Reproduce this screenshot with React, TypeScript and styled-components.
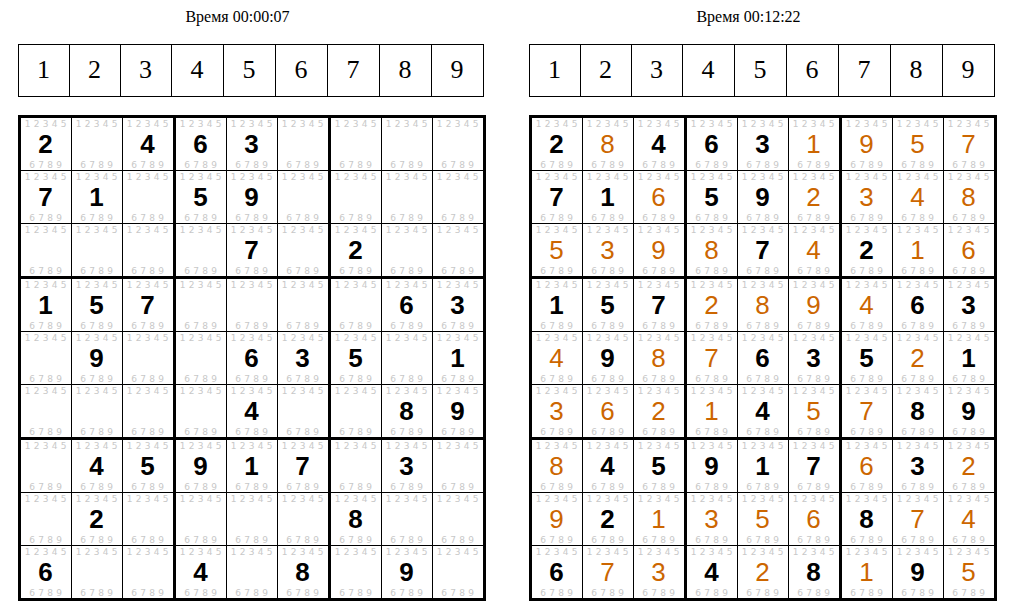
import React from 'react';
import styled, { createGlobalStyle } from 'styled-components';

const GlobalStyle = createGlobalStyle`
  *, *::before, *::after { box-sizing: border-box; }
  body {
    margin: 0;
    background: #fff;
    color: #000;
    font-family: "Liberation Serif", "Times New Roman", serif;
    font-size: 16px;
    line-height: 18px;
  }
`;

const Page = styled.main`
  display: grid;
  grid-template-columns: 1fr 1fr;
  column-gap: 43px;
  padding: 8px 22px 8px 18px;
`;

const Game = styled.section`
  display: flex;
  flex-direction: column;
  gap: 18px;
  min-width: 0;
`;

const Timer = styled.p`
  margin: 0;
  padding-right: 29px;
  text-align: center;
`;

const Picker = styled.div`
  display: grid;
  grid-template-columns: repeat(3, 51fr) repeat(6, 52fr);
  margin-right: 2px;
  border-left: 1px solid #000;
`;

const PickButton = styled.button`
  height: 53px;
  min-width: 0;
  margin: 0;
  padding: 0 1px 2px 0;
  border: solid #000;
  border-width: 1px 1px 1px 0;
  border-radius: 0;
  background: #fff;
  color: #000;
  font: 26px/30px "Liberation Serif", "Times New Roman", serif;
  cursor: pointer;
`;

const Board = styled.table`
  width: 100%;
  table-layout: fixed;
  border-collapse: separate;
  border-spacing: 0;
  border: solid #000;
  border-width: 3px 0 0 3px;
`;

const Column = styled.col<{ $wide: boolean }>`
  width: ${(p) => (p.$wide ? 53 : 51)}px;
`;

const Cell = styled.td<{ $blockRight: boolean; $blockBottom: boolean }>`
  padding: 0;
  vertical-align: top;
  border: solid #000;
  border-width: 0 ${(p) => (p.$blockRight ? 3 : 1)}px ${(p) => (p.$blockBottom ? 3 : 1)}px 0;
`;

const CellBody = styled.div`
  display: flex;
  flex-direction: column;
  align-items: center;
  height: 52px;
  padding: 1px 1px 0 0;
`;

const Hints = styled.div`
  display: grid;
  grid-auto-flow: column;
  grid-auto-columns: 9px;
  height: 10px;
  color: #c8c8c8;
  font: 9px/10px "DejaVu Sans", Verdana, sans-serif;
  text-align: center;
`;

const Value = styled.div<{ $given: boolean }>`
  height: 31px;
  color: ${(p) => (p.$given ? '#000' : '#cc6600')};
  font-family: "Liberation Sans", Arial, sans-serif;
  font-size: 26px;
  line-height: 31px;
  font-weight: ${(p) => (p.$given ? 700 : 400)};
`;

const DIGITS = ['1', '2', '3', '4', '5', '6', '7', '8', '9'];

const GIVEN = [
  '2.463....',
  '71.59....',
  '....7.2..',
  '157....63',
  '.9..635.1',
  '....4..89',
  '.45917.3.',
  '.2....8..',
  '6..4.8.9.',
];

const SOLVED = [
  '284631957',
  '716592348',
  '539874216',
  '157289463',
  '498763521',
  '362145789',
  '845917632',
  '921356874',
  '673428195',
];

function HintRow({ digits }: { digits: string[] }) {
  return (
    <Hints>
      {digits.map((d) => (
        <span key={d}>{d}</span>
      ))}
    </Hints>
  );
}

function Sudoku({ time, rows }: { time: string; rows: string[] }) {
  return (
    <Game>
      <Timer>Время {time}</Timer>
      <Picker>
        {DIGITS.map((d) => (
          <PickButton key={d} type="button">
            {d}
          </PickButton>
        ))}
      </Picker>
      <Board>
        <colgroup>
          {DIGITS.map((d, c) => (
            <Column key={d} $wide={c % 3 === 2} />
          ))}
        </colgroup>
        <tbody>
          {rows.map((row, r) => (
            <tr key={r}>
              {row.split('').map((ch, c) => (
                <Cell key={c} $blockRight={c % 3 === 2} $blockBottom={r % 3 === 2}>
                  <CellBody>
                    <HintRow digits={DIGITS.slice(0, 5)} />
                    <Value $given={GIVEN[r][c] !== '.'}>{ch === '.' ? '' : ch}</Value>
                    <HintRow digits={DIGITS.slice(5)} />
                  </CellBody>
                </Cell>
              ))}
            </tr>
          ))}
        </tbody>
      </Board>
    </Game>
  );
}

export default function App() {
  return (
    <>
      <GlobalStyle />
      <Page>
        <Sudoku time="00:00:07" rows={GIVEN} />
        <Sudoku time="00:12:22" rows={SOLVED} />
      </Page>
    </>
  );
}
